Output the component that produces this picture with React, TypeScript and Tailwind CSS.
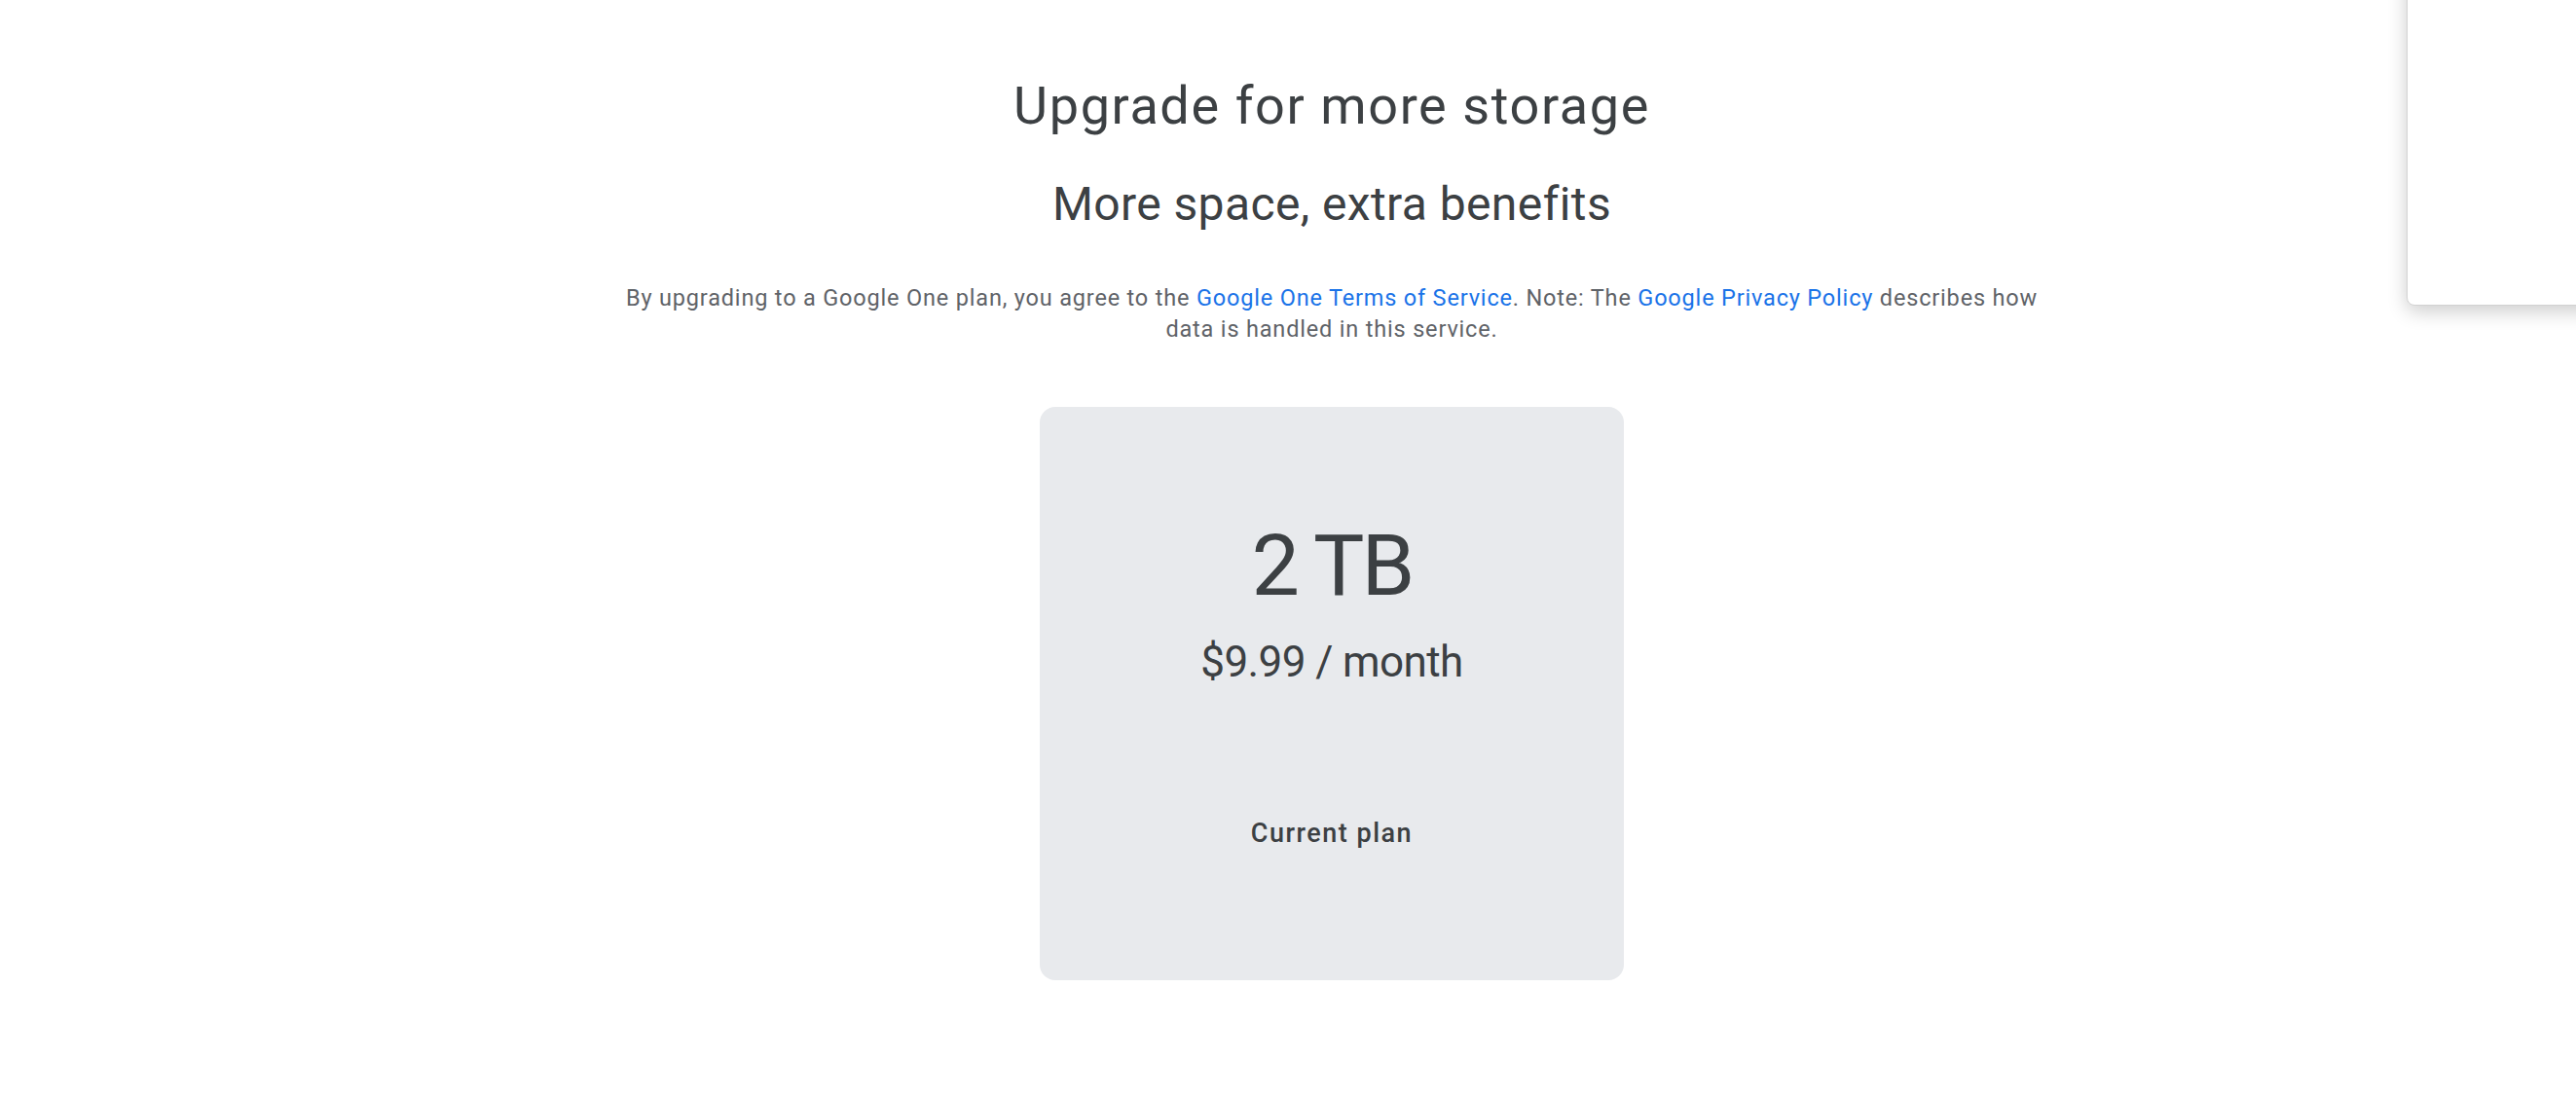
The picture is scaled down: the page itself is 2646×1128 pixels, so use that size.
import React from "react";

export default function App() {
  return (
    <div className="relative min-h-[1128px] w-full overflow-hidden bg-white" style={{ fontFamily: "Roboto, 'Liberation Sans', sans-serif" }}>
      <div className="flex flex-col items-center pl-[90px] pt-[77px]">
        <h1 className="text-[54px] leading-[64px] font-normal tracking-[1.6px] text-[#3c4043]">
          Upgrade for more storage
        </h1>
        <h2 className="mt-[41px] text-[48px] leading-[56px] font-normal tracking-[0.4px] text-[#3c4043]">
          More space, extra benefits
        </h2>
        <p className="mt-[52px] w-[1490px] text-center text-[23.5px] leading-[32px] tracking-[0.82px] text-[#5f6368]">
          By upgrading to a Google One plan, you agree to the <a className="text-[#1a73e8]" href="#">Google One Terms of Service</a>. Note: The <a className="text-[#1a73e8]" href="#">Google Privacy Policy</a> describes how data is handled in this service.
        </p>
        <div className="mt-[64px] flex h-[589px] w-[600px] flex-col items-center rounded-[16px] bg-[#e8eaed] pt-[113px] text-[#3c4043]">
          <div className="text-[88px] leading-[100px] font-normal tracking-[-3px]">2 TB</div>
          <div className="mt-[23px] text-[44px] leading-[52px] tracking-[-0.6px]">$9.99 / month</div>
          <div className="mt-[134px] text-[27px] leading-[32px] font-medium tracking-[1.5px]">Current plan</div>
        </div>
      </div>
      <div className="absolute left-[2472px] top-[-40px] h-[354px] w-[260px] rounded-[8px] border border-[#d2d2d2] bg-white shadow-[0_6px_20px_rgba(0,0,0,0.2)]" />
    </div>
  );
}
